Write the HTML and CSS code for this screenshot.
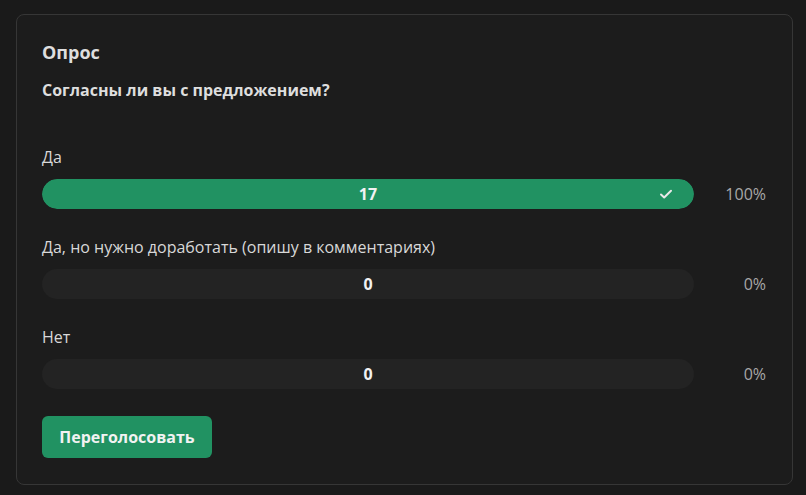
FILE: index.html
```html
<!DOCTYPE html>
<html lang="ru">
<head>
<meta charset="utf-8">
<link rel="stylesheet" href="styles.css">
</head>
<body>
<div class="card">
  <div class="title">Опрос</div>
  <div class="question">Согласны ли вы с предложением?</div>
  <div class="options">
    <div class="option">
      <div class="label">Да</div>
      <div class="row">
        <div class="bar">
          <div class="fill" style="width:100%"></div>
          <span class="count">17</span>
          <svg class="check" viewBox="0 0 16 16" width="16" height="16"><path d="M3 8.5l3.2 3L13 4.8" fill="none" stroke="#e8e8e8" stroke-width="2" stroke-linecap="round" stroke-linejoin="round"/></svg>
        </div>
        <div class="pct">100%</div>
      </div>
    </div>
    <div class="option">
      <div class="label">Да, но нужно доработать (опишу в комментариях)</div>
      <div class="row">
        <div class="bar"><span class="count">0</span></div>
        <div class="pct">0%</div>
      </div>
    </div>
    <div class="option">
      <div class="label">Нет</div>
      <div class="row">
        <div class="bar"><span class="count">0</span></div>
        <div class="pct">0%</div>
      </div>
    </div>
  </div>
  <button class="btn">Переголосовать</button>
</div>
</body>
</html>
```
FILE: styles.css
```css
html, body { margin: 0; padding: 0; }
body {
  background: #1a1a1a;
  font-family: "Open Sans", "Noto Sans", sans-serif;
  color: #dcdcdc;
  padding: 14px 14px 10px 16px;
}
.card {
  box-sizing: border-box;
  width: 777px;
  height: 471px;
  background: #1c1c1c;
  border: 1px solid #363636;
  border-radius: 8px;
  padding: 25px 25px 0 25px;
}
.title {
  font-size: 18px;
  line-height: 24px;
  font-weight: 700;
  color: #dedede;
}
.question {
  margin-top: 16px;
  font-size: 16px;
  line-height: 20px;
  font-weight: 700;
  color: #dedede;
}
.options {
  margin-top: 47px;
  display: flex;
  flex-direction: column;
  gap: 28px;
}
.label {
  font-size: 16px;
  line-height: 20px;
  color: #d8d8d8;
}
.row {
  margin-top: 12px;
  display: grid;
  grid-template-columns: 652px 72px;
  align-items: center;
}
.bar {
  position: relative;
  height: 30px;
  border-radius: 15px;
  background: #232323;
  display: flex;
  align-items: center;
  justify-content: center;
  overflow: hidden;
}
.fill {
  position: absolute;
  left: 0; top: 0; bottom: 0;
  background: #219262;
  border-radius: 15px;
}
.count {
  position: relative;
  font-size: 16px;
  font-weight: 700;
  color: #f2f2f2;
}
.check {
  position: absolute;
  right: 20px;
  top: 7px;
}
.pct {
  text-align: right;
  font-size: 16px;
  color: #a8a8a8;
}
.btn {
  margin-top: 27px;
  height: 42px;
  width: 170px;
  border: none;
  border-radius: 6px;
  background: #219262;
  color: #f2f2f2;
  font-family: "Open Sans", "Noto Sans", sans-serif;
  font-size: 16px;
  font-weight: 700;
  padding: 0;
}
```
